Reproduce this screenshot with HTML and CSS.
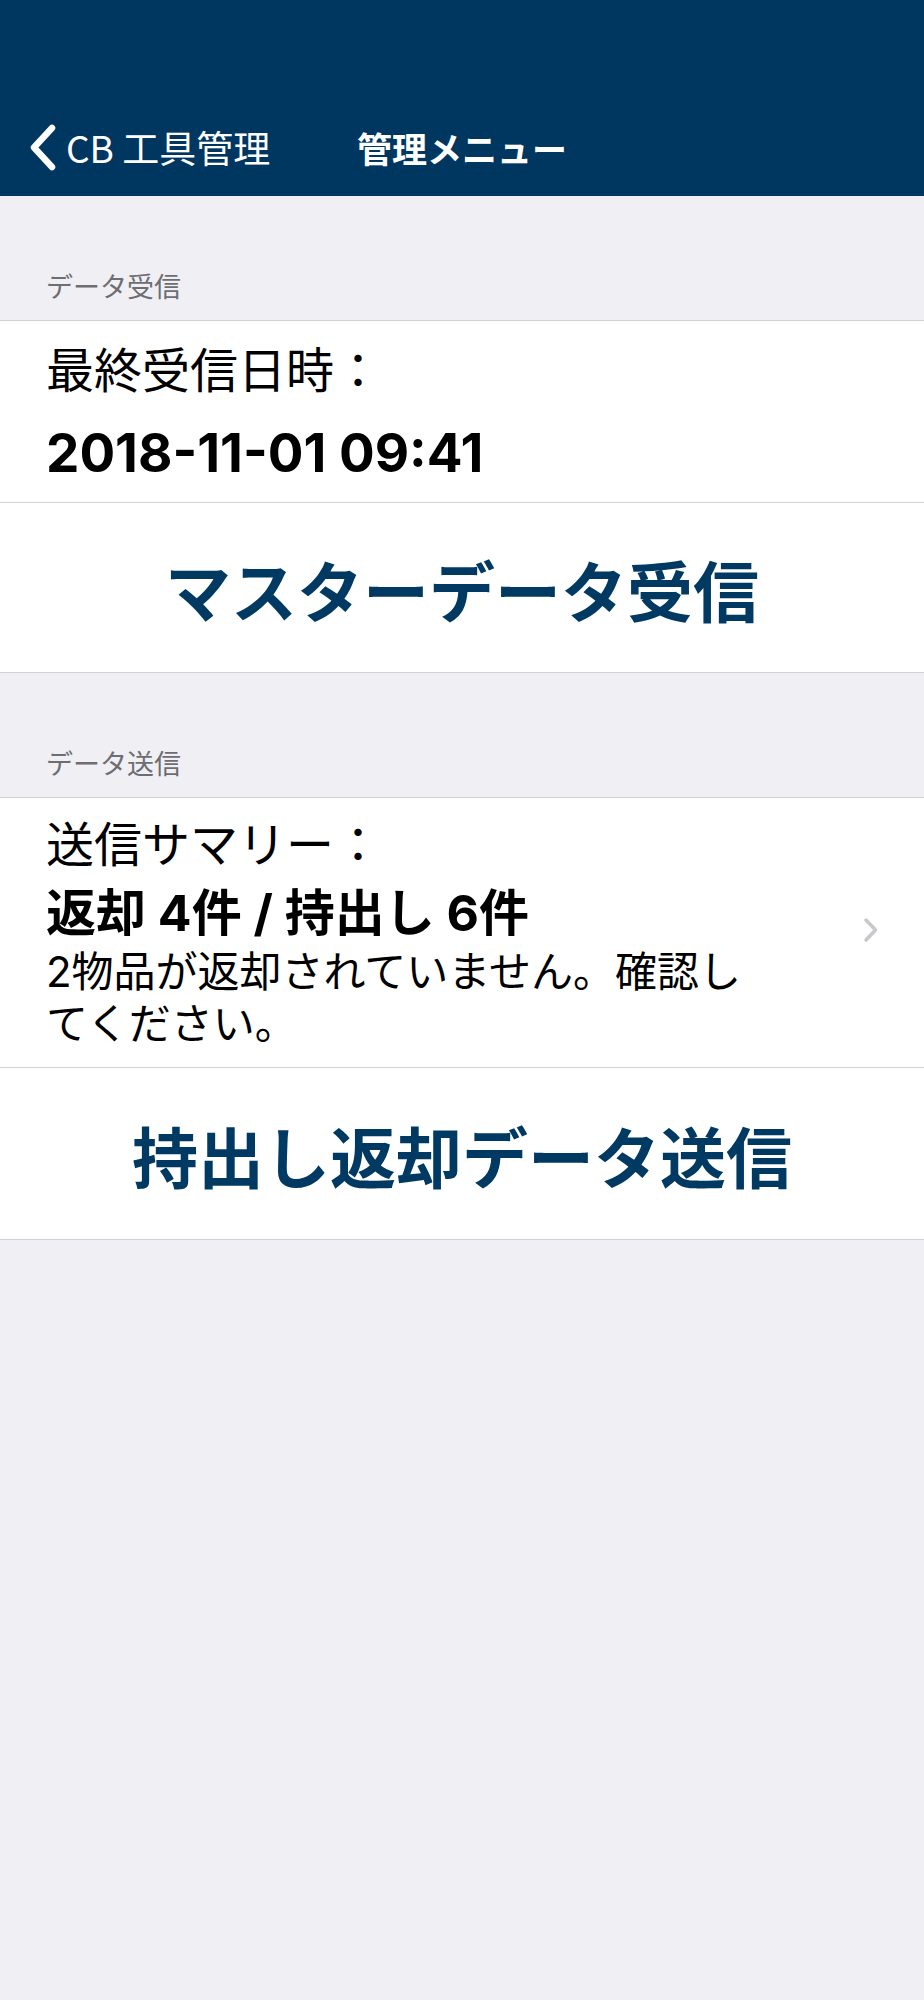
FILE: index.html
```html
<!DOCTYPE html>
<html lang="ja">
<head>
    <meta charset="UTF-8">
    <meta name="viewport" content="width=device-width, initial-scale=1.0">
    <title>管理メニュー</title>
    <link rel="stylesheet" href="styles.css">
</head>
<body>
    <header class="nav-bar">
        <div class="status-bar"></div>
        <div class="nav-row">
            <a class="nav-back" href="#">
                <svg class="back-chevron" viewBox="0 0 29 47" aria-hidden="true">
                    <polyline points="24,4 6,23.5 24,43" />
                </svg>
                <span>CB 工具管理</span>
            </a>
            <h1 class="nav-title">管理メニュー</h1>
            <span></span>
        </div>
    </header>

    <main>
        <section class="table-section">
            <h2 class="section-header">データ受信</h2>
            <div class="table-group">
                <div class="cell info-cell">
                    <p class="info-label">最終受信日時：</p>
                    <p class="info-date">2018-11-01 09:41</p>
                </div>
                <button class="cell action-cell" type="button">マスターデータ受信</button>
            </div>
        </section>

        <section class="table-section">
            <h2 class="section-header">データ送信</h2>
            <div class="table-group">
                <a class="cell summary-cell" href="#">
                    <div class="summary-text">
                        <p class="summary-label">送信サマリー：</p>
                        <p class="summary-count">返却 4件 / 持出し 6件</p>
                        <p class="summary-note">2物品が返却されていません。確認してください。</p>
                    </div>
                    <svg class="disclosure" viewBox="0 0 15 26" aria-hidden="true">
                        <polyline points="3,3 12.5,13 3,23" />
                    </svg>
                </a>
                <button class="cell action-cell action-cell-tall" type="button">持出し返却データ送信</button>
            </div>
        </section>
    </main>
</body>
</html>
```

FILE: styles.css
```css
body {
    margin: 0;
    min-height: 2000px;
    background-color: #efeff4;
    font-family: Inter, "Noto Sans CJK JP", sans-serif;
    color: #000;
}
p, h1, h2 {
    margin: 0;
}
a {
    color: inherit;
    text-decoration: none;
}

/* navigation bar */
.nav-bar {
    background-color: #003761;
    color: #fff;
}
.status-bar {
    height: 98px;
}
.nav-row {
    height: 98px;
    display: grid;
    grid-template-columns: 1fr auto 1fr;
    align-items: center;
}
.nav-back {
    display: flex;
    align-items: center;
    gap: 9px;
    padding-left: 28px;
    font-size: 37px;
    font-family: "Noto Sans CJK JP", sans-serif;
}
.back-chevron {
    width: 29px;
    height: 47px;
}
.back-chevron polyline {
    fill: none;
    stroke: #fff;
    stroke-width: 6.5;
    stroke-linecap: round;
    stroke-linejoin: round;
}
.nav-title {
    font-size: 35px;
    font-weight: bold;
    font-family: "Noto Sans CJK JP", sans-serif;
}

/* grouped table */
.section-header {
    padding: 72px 46px 16px;
    font-size: 27px;
    line-height: 36px;
    font-weight: normal;
    color: #6d6d72;
    font-family: "Noto Sans CJK JP", sans-serif;
}
.table-group {
    background-color: #fff;
    border-top: 1px solid #d1d0d5;
    border-bottom: 1px solid #d1d0d5;
}
.cell {
    display: block;
    width: 100%;
    box-sizing: border-box;
    background-color: #fff;
    padding-left: 46px;
}
.cell + .cell {
    border-top: 1px solid #d1d0d5;
}
.info-cell {
    padding-top: 8px;
    padding-bottom: 7px;
    line-height: 83px;
}
.info-label {
    font-size: 48px;
}
.info-date {
    font-size: 53px;
    font-weight: bold;
}
.action-cell {
    border: none;
    padding: 0;
    height: 170px;
    font-family: inherit;
    font-size: 66px;
    font-weight: bold;
    color: #003a63;
    text-align: center;
    cursor: pointer;
}
.action-cell-tall {
    height: 172px;
}
.summary-cell {
    display: flex;
    align-items: center;
    justify-content: space-between;
    padding: 12px 46px 17px 46px;
}
.summary-label {
    font-size: 48px;
    line-height: 70px;
}
.summary-count {
    font-size: 50px;
    line-height: 66px;
    font-weight: bold;
}
.summary-note {
    max-width: 715px;
    font-size: 42px;
    line-height: 52px;
}
.disclosure {
    width: 15px;
    height: 26px;
    flex-shrink: 0;
}
.disclosure polyline {
    fill: none;
    stroke: #c7c7cc;
    stroke-width: 3.5;
    stroke-linecap: round;
    stroke-linejoin: round;
}
```
